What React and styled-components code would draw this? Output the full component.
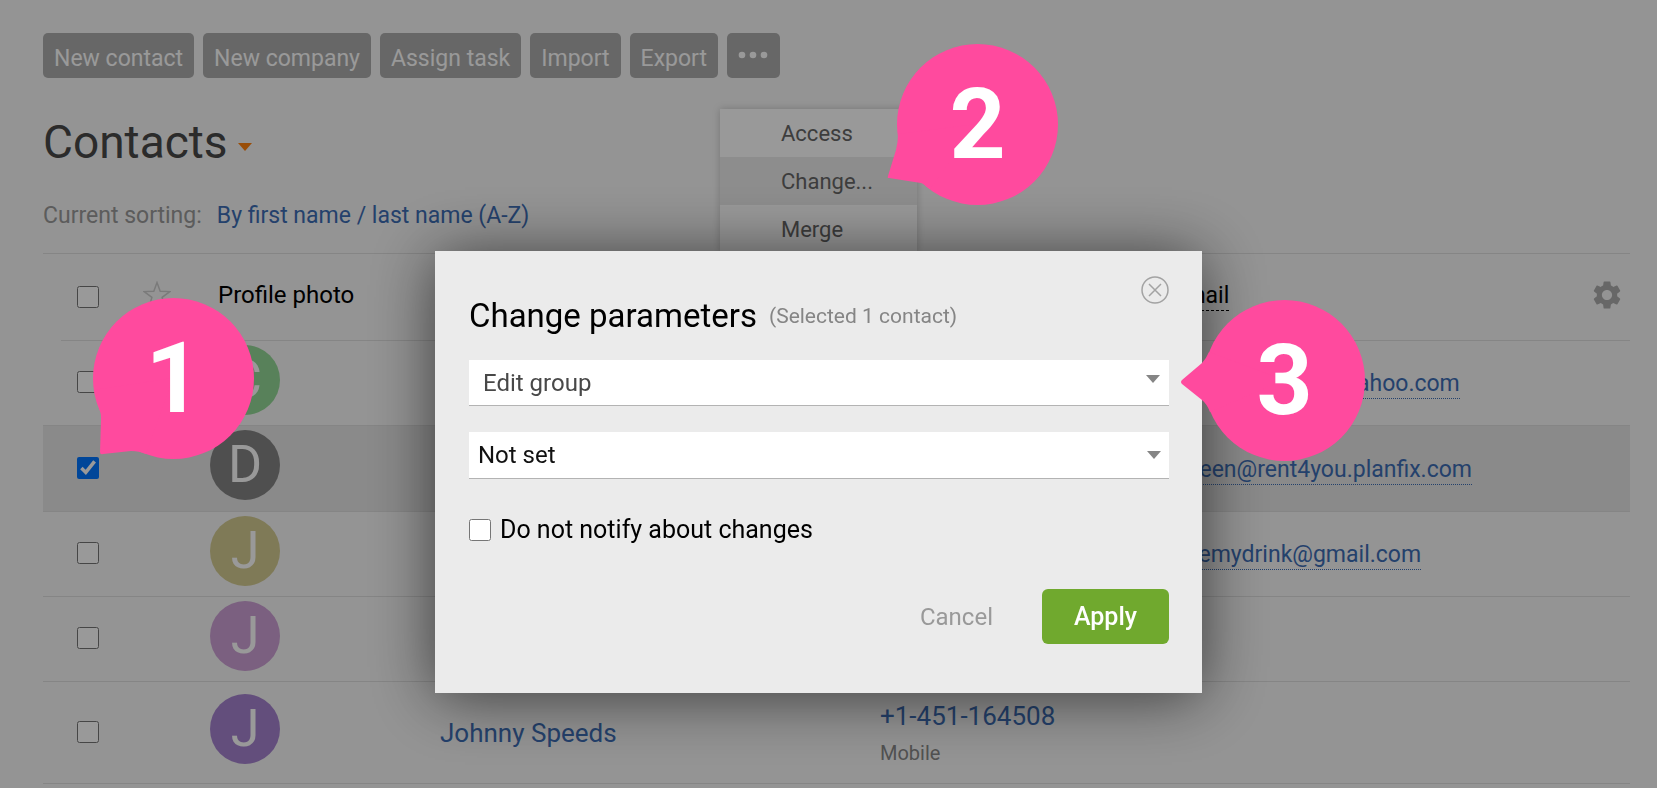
import React from "react";
import styled, { createGlobalStyle } from "styled-components";
import { MdSettings } from "react-icons/md";

const contacts = [
  { id: 1, letter: "C", color: "#93d796", email: "charles.moreno@yahoo.com" },
  { id: 2, letter: "D", color: "#848484", email: "dgreen@rent4you.planfix.com", selected: true },
  { id: 3, letter: "J", color: "#d4cb91", email: "Jeremydrink@gmail.com" },
  { id: 4, letter: "J", color: "#cda0d5" },
  { id: 5, letter: "J", color: "#a582cf", name: "Johnny Speeds", phone: "+1-451-164508", phoneType: "Mobile" }
];

const actions = ["New contact", "New company", "Assign task", "Import", "Export"];

const tails = {
  bottomLeft: "M1 92 C3 103 9 112 8 122 L7 154 Q7 157 10 156 L38 153 C44 153 48 154 53 156 L80 80 Z",
  left: "M5 52 Q2 59 -2 63 L-22 80 Q-24 82 -22 84 L-2 100 Q3 104 6 112 L80 80 Z",
  lowerLeft: "M1 90 Q1 98 -1 106 L-9 132 Q-10 134 -8 134 L24 139 Q28 140 33 145 L80 80 Z"
};

const Callout = ({ left, top, tail, children }) => (
  <CalloutBox left={ left } top={ top }>
    <CalloutShape viewBox="0 0 161 161">
      <circle cx="80.5" cy="80.5" r="80.5" />
      <path d={ tails[tail] } />
    </CalloutShape>
    <CalloutNumber>{ children }</CalloutNumber>
  </CalloutBox>
);

const ContactRow = ({ contact: { letter, color, name, phone, phoneType, email, selected } }) => (
  <Row selected={ selected } tall={ !!phone }>
    <CheckCell>
      <Checkbox aria-label="Select contact" defaultChecked={ selected } />
    </CheckCell>
    <Cell />
    <PhotoCell>
      <Avatar color={ color }>{ letter }</Avatar>
    </PhotoCell>
    <Cell>{ name && <NameLink href="#">{ name }</NameLink> }</Cell>
    <Cell>
      {
        phone &&
          <Phone>
            <NameLink href="#">{ phone }</NameLink>
            <PhoneType>{ phoneType }</PhoneType>
          </Phone>
      }
    </Cell>
    <Cell>{ email && <EmailLink href="#">{ email }</EmailLink> }</Cell>
    <Cell />
  </Row>
);

const ChangeDialog = () => (
  <Dialog role="dialog" aria-modal="true" aria-labelledby="dialog-title">
    <CloseButton aria-label="Close">
      <svg width="28" height="28" viewBox="0 0 28 28" fill="none" stroke="#a3a3a3" strokeWidth="1.5">
        <circle cx="14" cy="14" r="13" />
        <path d="M8 8 L20 20 M20 8 L8 20" />
      </svg>
    </CloseButton>
    <DialogHead>
      <DialogTitle id="dialog-title">Change parameters</DialogTitle>
      <DialogNote>(Selected 1 contact)</DialogNote>
    </DialogHead>
    <Fields>
      <Field>
        <Select aria-label="Parameter" muted>
          <option>Edit group</option>
        </Select>
        <FieldArrow viewBox="0 0 14 8" muted><path d="M0 0 H14 L7 8 Z" /></FieldArrow>
      </Field>
      <Field>
        <Select aria-label="Group">
          <option>Not set</option>
        </Select>
        <FieldArrow viewBox="0 0 14 8"><path d="M0 0 H14 L7 8 Z" /></FieldArrow>
      </Field>
    </Fields>
    <NotifyLabel>
      <Checkbox />
      Do not notify about changes
    </NotifyLabel>
    <DialogButtons>
      <CancelButton>Cancel</CancelButton>
      <ApplyButton>Apply</ApplyButton>
    </DialogButtons>
  </Dialog>
);

class App extends React.Component {

  render() {
    return (
      <React.Fragment>
        <GlobalStyle />
        <Page>
          <Toolbar>
            { actions.map(action => <ToolButton key={ action }>{ action }</ToolButton>) }
            <ToolButton aria-label="More">
              <svg width="31" height="18" viewBox="0 0 31 18" fill="#fff">
                <circle cx="4" cy="5" r="3.3" />
                <circle cx="15" cy="5" r="3.3" />
                <circle cx="26" cy="5" r="3.3" />
              </svg>
            </ToolButton>
          </Toolbar>
          <Heading>
            <Title>Contacts</Title>
            <TitleArrow viewBox="0 0 14 8"><path d="M0 0 H14 L7 8 Z" /></TitleArrow>
          </Heading>
          <Sorting>
            Current sorting:
            <SortLink href="#">By first name / last name (A-Z)</SortLink>
          </Sorting>
          <Table>
            <colgroup>
              <Col size={ 90 } />
              <Col size={ 77 } />
              <Col size={ 230 } />
              <Col size={ 440 } />
              <Col size={ 286 } />
              <col />
              <Col size={ 60 } />
            </colgroup>
            <thead>
              <tr>
                <HeadCheckCell>
                  <Checkbox aria-label="Select all" />
                </HeadCheckCell>
                <HeadCell>
                  <Star viewBox="0 0 28 28">
                    <path d="M14 1.5 L17.2 10.3 L26.8 10.6 L19.1 16.4 L21.8 25.5 L14 20.1 L6.2 25.5 L8.9 16.4 L1.2 10.6 L10.8 10.3 Z" />
                  </Star>
                </HeadCell>
                <HeadCell indent>Profile photo</HeadCell>
                <HeadCell />
                <HeadCell />
                <HeadCell><HeadMark>E-mail</HeadMark></HeadCell>
                <HeadCell>
                  <SettingsButton aria-label="Settings"><MdSettings size={ 34 } /></SettingsButton>
                </HeadCell>
              </tr>
            </thead>
            <tbody>
              { contacts.map(contact => <ContactRow key={ contact.id } contact={ contact } />) }
            </tbody>
          </Table>
          <Menu>
            <MenuItem>Access</MenuItem>
            <MenuItem active>Change...</MenuItem>
            <MenuItem>Merge</MenuItem>
          </Menu>
        </Page>
        <Overlay>
          <ChangeDialog />
        </Overlay>
        <Callout left={ 93 } top={ 298 } tail="bottomLeft">1</Callout>
        <Callout left={ 897 } top={ 44 } tail="lowerLeft">2</Callout>
        <Callout left={ 1204 } top={ 300 } tail="left">3</Callout>
      </React.Fragment>
    )
  }
}

export default App;


const GlobalStyle = createGlobalStyle`
  * {
    box-sizing: border-box;
  }

  body {
    margin: 0;
    overflow: hidden;
    background: #f7f7f7;
    font-family: Roboto, "Open Sans", sans-serif;
    font-size: 24px;
  }

  button, select {
    font: inherit;
  }
`;

const Page = styled.div`
  position: relative;
  padding: 33px 27px 0 43px;
`;

const Toolbar = styled.div`
  display: flex;
  gap: 9px;
`;

const ToolButton = styled.button`
  display: flex;
  align-items: center;
  height: 45px;
  padding: 6px 11px 0;
  border: 0;
  border-radius: 5px;
  background: #acacac;
  color: #fff;
  font-size: 23px;
`;

const Heading = styled.div`
  display: flex;
  align-items: center;
  gap: 10px;
  margin-top: 32px;
`;

const Title = styled.h1`
  margin: 0;
  font-size: 46px;
  font-weight: 400;
  line-height: 64px;
  color: #484848;
`;

const TitleArrow = styled.svg`
  width: 14px;
  height: 8px;
  margin-top: 10px;
  fill: #ff800d;
`;

const Sorting = styled.div`
  display: flex;
  gap: 15px;
  margin: 25px 0 21px;
  font-size: 23px;
  line-height: 33px;
  color: #999;
`;

const SortLink = styled.a`
  color: #3d6db4;
  text-decoration: none;
`;

const Table = styled.table`
  width: 100%;
  table-layout: fixed;
  border-collapse: separate;
  border-spacing: 0;
  border-top: 1px solid #dedede;
`;

const Col = styled.col`
  width: ${props => props.size}px;
`;

const HeadCell = styled.th`
  height: 87px;
  padding: 0 0 4px ${props => props.indent ? 8 : 0}px;
  border-bottom: 1px solid #dedede;
  font-weight: 400;
  text-align: left;
  white-space: nowrap;
  color: #000;
`;

const HeadCheckCell = styled(HeadCell)`
  position: relative;
  padding: 0 0 2px 34px;
  border-bottom: 0;

  &::after {
    content: "";
    position: absolute;
    right: 0;
    bottom: 0;
    left: 18px;
    border-bottom: 1px solid #dedede;
  }
`;

const HeadMark = styled.span`
  padding-bottom: 1px;
  border-bottom: 1px dashed #000;
  font-size: 23px;
`;

const Star = styled.svg`
  display: block;
  width: 28px;
  height: 28px;
  margin-left: 10px;
  fill: none;
  stroke: #ccc;
  stroke-width: 1.5;
`;

const SettingsButton = styled.button`
  display: flex;
  margin-left: 20px;
  padding: 0;
  border: 0;
  background: none;
  color: #acacac;
`;

const Row = styled.tr`
  height: ${props => props.tall ? 102 : props.selected ? 86 : 85}px;
  background: ${props => props.selected ? "#e6e6e6" : "none"};
`;

const Cell = styled.td`
  padding: 0;
  border-bottom: 1px solid #dedede;
  white-space: nowrap;
`;

const CheckCell = styled(Cell)`
  padding: 0 0 2px 34px;
`;

const PhotoCell = styled(Cell)`
  padding: 0 0 7px;
`;

const Checkbox = styled.input.attrs({ type: "checkbox" })`
  display: block;
  width: 22px;
  height: 22px;
  margin: 0;
`;

const Avatar = styled.div`
  display: flex;
  align-items: center;
  justify-content: center;
  width: 70px;
  height: 70px;
  border-radius: 50%;
  background: ${props => props.color};
  color: #fff;
  font-size: 52px;
  line-height: 70px;
`;

const NameLink = styled.a`
  font-size: 26px;
  color: #3d6db4;
  text-decoration: none;
`;

const EmailLink = styled.a`
  padding-bottom: 1px;
  border-bottom: 1px dotted #3d6db4;
  font-size: 23px;
  color: #3d6db4;
  text-decoration: none;
`;

const Phone = styled.div`
  display: flex;
  flex-direction: column;
  gap: 10px;
`;

const PhoneType = styled.span`
  font-size: 20px;
  color: #888;
`;

const Menu = styled.div`
  position: absolute;
  top: 109px;
  left: 720px;
  display: flex;
  flex-direction: column;
  width: 197px;
  background: #fff;
  box-shadow: 0 0 8px rgba(0, 0, 0, 0.2);
`;

const MenuItem = styled.button`
  height: 48px;
  padding: 1px 0 0 61px;
  border: 0;
  background: ${props => props.active ? "#ebebeb" : "#fff"};
  color: #666;
  font-size: 22px;
  text-align: left;
`;

const Overlay = styled.div`
  position: fixed;
  inset: 0;
  display: flex;
  align-items: flex-start;
  justify-content: center;
  padding: 251px 20px 0 0;
  background: rgba(0, 0, 0, 0.4);
`;

const Dialog = styled.div`
  position: relative;
  width: 767px;
  padding: 41px 33px 49px 34px;
  background: #ebebeb;
  box-shadow: 0 4px 60px rgba(0, 0, 0, 0.6);
`;

const CloseButton = styled.button`
  position: absolute;
  top: 25px;
  right: 33px;
  display: flex;
  padding: 0;
  border: 0;
  background: none;
`;

const DialogHead = styled.div`
  display: flex;
  align-items: center;
  gap: 12px;
`;

const DialogTitle = styled.h2`
  margin: 0;
  font-size: 33px;
  font-weight: 400;
  line-height: 48px;
`;

const DialogNote = styled.span`
  font-size: 21px;
  color: #858585;
`;

const Fields = styled.div`
  display: flex;
  flex-direction: column;
  gap: 26px;
  margin-top: 20px;
`;

const Field = styled.div`
  position: relative;
`;

const Select = styled.select`
  display: block;
  width: 100%;
  height: ${props => props.muted ? 46 : 47}px;
  padding: 0 40px 0 ${props => props.muted ? 14 : 9}px;
  border: 0;
  border-bottom: 1px solid #b3b3b3;
  border-radius: 0;
  background: #fff;
  color: ${props => props.muted ? "#484848" : "#111"};
  appearance: none;
`;

const FieldArrow = styled.svg`
  position: absolute;
  top: ${props => props.muted ? 15 : 19}px;
  right: ${props => props.muted ? 9 : 8}px;
  width: 14px;
  height: 8px;
  fill: #858585;
  pointer-events: none;
`;

const NotifyLabel = styled.label`
  display: flex;
  align-items: center;
  gap: 9px;
  margin-top: 35px;
  font-size: 25px;
  line-height: 32px;
`;

const DialogButtons = styled.div`
  display: flex;
  justify-content: flex-end;
  gap: 16px;
  margin-top: 43px;
`;

const CancelButton = styled.button`
  height: 55px;
  padding: 0 33px;
  border: 0;
  background: none;
  color: #999;
`;

const ApplyButton = styled.button`
  width: 127px;
  height: 55px;
  border: 0;
  border-radius: 6px;
  background: #70a92e;
  color: #fff;
  font-size: 25px;
  font-weight: 500;
`;

const CalloutBox = styled.div`
  position: absolute;
  top: ${props => props.top}px;
  left: ${props => props.left}px;
  display: flex;
  align-items: center;
  justify-content: center;
  width: 161px;
  height: 161px;
`;

const CalloutShape = styled.svg`
  position: absolute;
  inset: 0;
  overflow: visible;
  fill: #ff4a9e;
`;

const CalloutNumber = styled.span`
  position: relative;
  color: #fff;
  font-size: 98px;
  font-weight: 700;
`;
